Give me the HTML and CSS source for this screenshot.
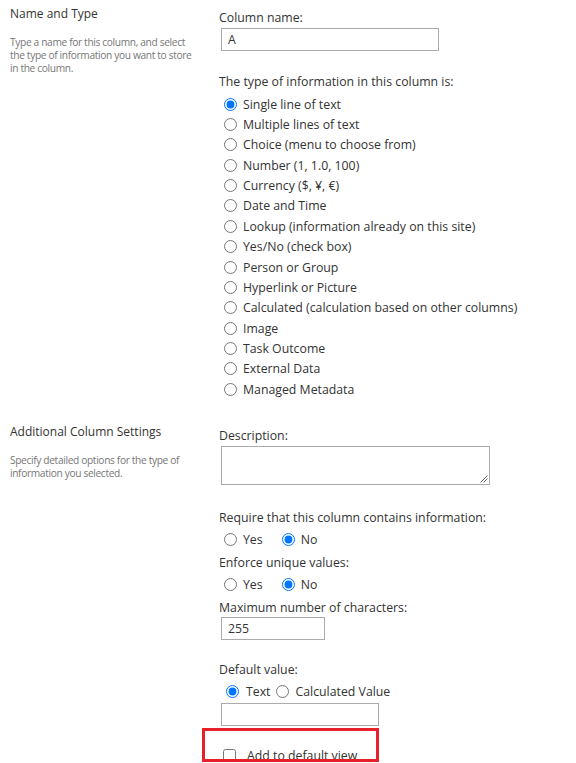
FILE: index.html
```html
<!DOCTYPE html>
<html>
<head>
<meta charset="utf-8">
<link rel="stylesheet" href="styles.css">
</head>
<body>
<div class="section s1">
  <div class="side">
    <div class="title">Name and Type</div>
    <div class="desc">Type a name for this column, and select the type of information you want to store in the column.</div>
  </div>
  <div class="main">
    <div class="label">Column name:</div>
    <div class="box name-box">A</div>
    <div class="label type-label">The type of information in this column is:</div>
    <div class="radios">
      <label class="opt"><input type="radio" name="t" checked> Single line of text</label>
      <label class="opt"><input type="radio" name="t"> Multiple lines of text</label>
      <label class="opt"><input type="radio" name="t"> Choice (menu to choose from)</label>
      <label class="opt"><input type="radio" name="t"> Number (1, 1.0, 100)</label>
      <label class="opt"><input type="radio" name="t"> Currency ($, ¥, €)</label>
      <label class="opt"><input type="radio" name="t"> Date and Time</label>
      <label class="opt"><input type="radio" name="t"> Lookup (information already on this site)</label>
      <label class="opt"><input type="radio" name="t"> Yes/No (check box)</label>
      <label class="opt"><input type="radio" name="t"> Person or Group</label>
      <label class="opt"><input type="radio" name="t"> Hyperlink or Picture</label>
      <label class="opt"><input type="radio" name="t"> Calculated (calculation based on other columns)</label>
      <label class="opt"><input type="radio" name="t"> Image</label>
      <label class="opt"><input type="radio" name="t"> Task Outcome</label>
      <label class="opt"><input type="radio" name="t"> External Data</label>
      <label class="opt"><input type="radio" name="t"> Managed Metadata</label>
    </div>
  </div>
</div>
<div class="section s2">
  <div class="side">
    <div class="title">Additional Column Settings</div>
    <div class="desc">Specify detailed options for the type of information you selected.</div>
  </div>
  <div class="main">
    <div class="label">Description:</div>
    <div class="box area"><svg class="grip" width="8" height="8" viewBox="0 0 8 8"><path d="M7.5 0.5L0.5 7.5M7.5 3.5L3.5 7.5" stroke="#666" stroke-width="1" fill="none"/></svg></div>
    <div class="label req-label">Require that this column contains information:</div>
    <div class="pair">
      <label class="inl yes"><input type="radio" name="r"> Yes</label>
      <label class="inl"><input type="radio" name="r" checked> No</label>
    </div>
    <div class="label after-pair">Enforce unique values:</div>
    <div class="pair">
      <label class="inl yes"><input type="radio" name="u"> Yes</label>
      <label class="inl"><input type="radio" name="u" checked> No</label>
    </div>
    <div class="label after-pair">Maximum number of characters:</div>
    <div class="box max-box">255</div>
    <div class="label def-label">Default value:</div>
    <div class="pair def-pair">
      <label class="inl txt"><input type="radio" name="d" checked> Text</label>
      <label class="inl"><input type="radio" name="d"> Calculated Value</label>
    </div>
    <div class="box def-box"></div>
    <div class="chk-row">
      <label class="chk"><input type="checkbox"> Add to default view</label>
      <div class="highlight"></div>
    </div>
  </div>
</div>
</body>
</html>
```
FILE: styles.css
```css
html, body {
  margin: 0;
  padding: 0;
  background: #fff;
}
body {
  font-family: "Open Sans", "Noto Sans", sans-serif;
  font-size: 12.3px;
  color: #333;
  width: 576px;
  height: 763px;
  overflow: hidden;
}
.section {
  display: flex;
}
.side {
  width: 200px;
  padding-left: 10px;
  margin-right: 9px;
}
.title {
  font-size: 12px;
  line-height: 16px;
  color: #333;
}
.desc {
  font-size: 10.2px;
  letter-spacing: -0.35px;
  line-height: 13px;
  color: #777;
  margin-top: 14px;
  width: 188px;
}
.s1 .side { padding-top: 6px; }
.s1 .main { padding-top: 9px; }
.main {
  flex: 1;
}
.label {
  line-height: 18px;
  color: #333;
}
.box {
  border: 1px solid #ababab;
  box-sizing: border-box;
  margin-left: 2px;
  padding-left: 6px;
  line-height: 21px;
  color: #333;
}
.name-box { width: 218px; height: 23px; margin-top: 1px; }
.type-label { margin-top: 22px; }
.radios { margin-top: 3px; }
.opt {
  display: flex;
  align-items: center;
  height: 20.36px;
  padding-left: 4px;
}
input[type=radio] {
  width: 13px;
  height: 13px;
  margin: 0 6px 0 1px;
  accent-color: #0075ff;
}
.s2 { margin-top: 25px; }
.s2 .side { padding-top: 0; }
.s2 .desc { margin-top: 14px; line-height: 12.5px; }
.s2 .main { padding-top: 3px; }
.area {
  width: 269px;
  height: 39px;
  margin-top: 1px;
  position: relative;
}
.grip { position: absolute; right: 1px; bottom: 1px; }
.req-label { margin-top: 24px; }
.pair {
  display: flex;
  align-items: center;
  height: 24px;
  padding-left: 4px;
}
.after-pair { margin-top: 3px; }
.inl { display: flex; align-items: center; }
.yes { margin-right: 18px; }
.def-pair { padding-left: 6px; }
.def-pair input[type=radio] { margin-right: 7px; }
.txt { margin-right: 4px; }
.max-box { width: 104px; height: 23px; }
.def-label { margin-top: 21px; }
.def-box { width: 158px; height: 23px; }
.chk-row {
  position: relative;
  height: 40px;
  padding: 23px 0 0 4px;
  box-sizing: border-box;
}
.chk { display: flex; align-items: center; height: 13px; }
.chk input {
  width: 13px;
  height: 13px;
  margin: 0 11px 0 0;
}
.highlight {
  position: absolute;
  left: -17px;
  top: 2px;
  width: 177px;
  height: 34px;
  box-sizing: border-box;
  border: 3px solid #e8202a;
}
```
